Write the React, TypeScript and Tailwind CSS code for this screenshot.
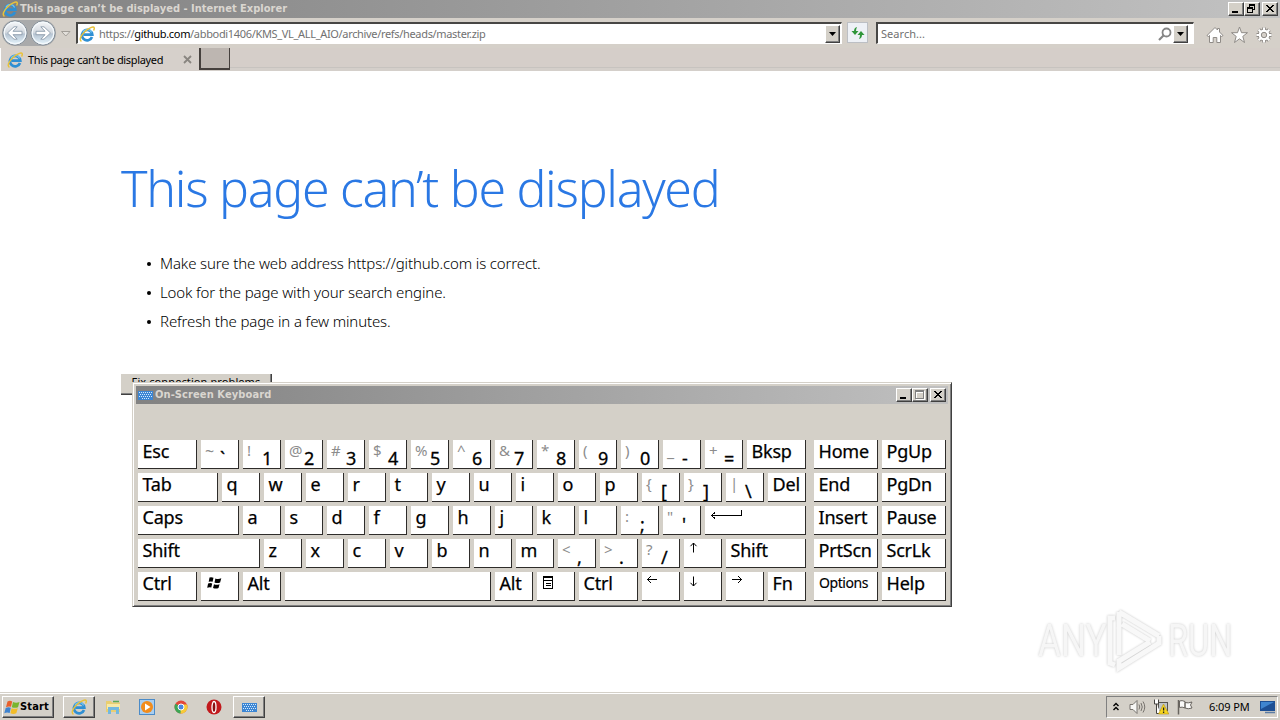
import type { ReactNode } from "react";

type KeyDef = {
  w?: string;
  label?: string;
  top?: string;
  main?: string;
  icon?: ReactNode;
};

const ArrowLeft = (
  <svg width="11" height="9" viewBox="0 0 11 9" className="absolute left-[5px] top-[3px]" shapeRendering="crispEdges" fill="none" stroke="#000">
    <path d="M0 4.5H10M4 1L0.5 4.5L4 8" />
  </svg>
);
const ArrowRight = (
  <svg width="11" height="9" viewBox="0 0 11 9" className="absolute left-[6px] top-[3px]" shapeRendering="crispEdges" fill="none" stroke="#000">
    <path d="M0 4.5H10M6 1L9.5 4.5L6 8" />
  </svg>
);
const ArrowUp = (
  <svg width="9" height="11" viewBox="0 0 9 11" className="absolute left-[5px] top-[3px]" fill="none" stroke="#000">
    <path d="M4.5 1V10.5M1.5 4.200L4.5 1L7.500 4.200" />
  </svg>
);
const ArrowDown = (
  <svg width="9" height="11" viewBox="0 0 9 11" className="absolute left-[5px] top-[4px]" fill="none" stroke="#000">
    <path d="M4.5 0.500V10M1.500 6.800L4.5 10L7.500 6.800" />
  </svg>
);
const EnterArrow = (
  <svg width="32" height="10" viewBox="0 0 32 10" className="absolute left-[6px] top-[4px]" shapeRendering="crispEdges" fill="none" stroke="#000">
    <path d="M0 5.5H30.5V0M4 2.5L0.5 5.5L4 8.5" />
  </svg>
);
const WinLogo = (
  <svg width="15" height="12" viewBox="0 0 15 12" className="absolute left-[6px] top-[5px]" fill="#000">
    <path d="M2.500 0.600Q4.500 0 6.500 0.800L5.600 4.800Q4 4 1.700 4.800zM8.400 1.400Q11 2.800 14.300 1.300L13.100 5.400Q10.500 6.600 7.500 5.400zM1.100 6.500Q3.500 5.700 5.200 6.500L4.300 10.500Q2.500 9.800 0.200 10.800zM7 7.200Q9.500 8.400 12.500 7.200L11.500 11Q9 12.200 6 11z" />
  </svg>
);
const MenuIcon = (
  <svg width="11" height="13" viewBox="0 0 11 13" className="absolute left-[6px] top-[4px]" shapeRendering="crispEdges">
    <rect x="0.500" y="0.500" width="9" height="12" fill="#fff" stroke="#000" />
    <path d="M0 1.500H10M0 4.500H10M3 7.500H8M3 9.500H8" stroke="#000" />
  </svg>
);

const letters = (s: string): KeyDef[] => s.split("").map((c) => ({ label: c }));
const pair = (top: string, main: string): KeyDef => ({ top, main });

const rows: KeyDef[][] = [
  [
    { label: "Esc", w: "w-[59px]" },
    pair("~", "`"),
    pair("!", "1"),
    pair("@", "2"),
    pair("#", "3"),
    pair("$", "4"),
    pair("%", "5"),
    pair("^", "6"),
    pair("&", "7"),
    pair("*", "8"),
    pair("(", "9"),
    pair(")", "0"),
    pair("_", "-"),
    pair("+", "="),
    { label: "Bksp", w: "w-[59px]" },
  ],
  [
    { label: "Tab", w: "w-[80px]" },
    ...letters("qwertyuiop"),
    pair("{", "["),
    pair("}", "]"),
    pair("|", "\\"),
    { label: "Del" },
  ],
  [
    { label: "Caps", w: "w-[101px]" },
    ...letters("asdfghjkl"),
    pair(":", ";"),
    pair('"', "'"),
    { icon: EnterArrow, w: "w-[101px]" },
  ],
  [
    { label: "Shift", w: "w-[122px]" },
    ...letters("zxcvbnm"),
    pair("<", ","),
    pair(">", "."),
    pair("?", "/"),
    { icon: ArrowUp },
    { label: "Shift", w: "w-[80px]" },
  ],
  [
    { label: "Ctrl", w: "w-[59px]" },
    { icon: WinLogo },
    { label: "Alt" },
    { w: "w-[206px]" },
    { label: "Alt" },
    { icon: MenuIcon },
    { label: "Ctrl", w: "w-[59px]" },
    { icon: ArrowLeft },
    { icon: ArrowDown },
    { icon: ArrowRight },
    { label: "Fn" },
  ],
];

const sideKeys = ["Home", "PgUp", "End", "PgDn", "Insert", "Pause", "PrtScn", "ScrLk", "Options", "Help"];

function Key({ w = "w-[38px]", label, top, main, icon }: KeyDef) {
  const small = label === "Options";
  return (
    <div className={`relative h-[29px] shrink-0 border-r border-b border-[#2e2c2a] bg-white overflow-hidden ${w}`}>
      {label && (
        <span
          className={
            small
              ? "block pl-[5px] pt-px text-[14px] leading-[20px] tracking-[-0.45px] [-webkit-text-stroke:0.15px_#000]"
              : "-mt-px block pl-[4.500px] text-[18px] leading-[24px] tracking-[-0.2px] [-webkit-text-stroke:0.25px_#000]"
          }
        >
          {label}
        </span>
      )}
      {top && (
        <span
          className={
            top === "~" || top === "_"
              ? "absolute left-[4px] top-px text-[16px] leading-[20px] text-[#8c8c8c]"
              : "absolute left-[4px] top-0 text-[15px] leading-[20px] text-[#8c8c8c]"
          }
        >
          {top}
        </span>
      )}
      {main && (
        <span className="absolute left-[19px] top-[6px] text-[18px] leading-[24px] [-webkit-text-stroke:0.3px_#000]">
          {main}
        </span>
      )}
      {icon}
    </div>
  );
}

function IeIcon({ size = 16 }: { size?: number }) {
  return (
    <svg width={size} height={size} viewBox="0 0 16 16" className="shrink-0" fill="none">
      <path d="M13 11A5.200 5.200 0 1 1 13.300 8.700H4.500" stroke="#2f8fd3" strokeWidth="2.700" />
      <path d="M12.600 6.500A4.700 4.700 0 0 0 3.800 6.500" stroke="#74c4f0" strokeWidth="1.100" />
      <path d="M2.500 15.200C0 14.500 1.500 9.500 6 5.500C10 1.800 14.500 0 15.200 1.800C15.500 2.600 15 3.700 14.500 4.500" stroke="#e9c23a" strokeWidth="1.500" />
    </svg>
  );
}

function KeyboardIcon() {
  return (
    <svg width="15" height="9" viewBox="0 0 15 9" className="shrink-0" shapeRendering="crispEdges">
      <rect width="15" height="9" fill="#3c86d4" />
      <path d="M1 1.500H14M1 5.500H14" stroke="#d5e9fb" strokeDasharray="1 1" />
      <path d="M2 3.500H13M4 7.500H11" stroke="#d5e9fb" strokeDasharray="1 1" />
    </svg>
  );
}

function WinButton({ kind }: { kind: "min" | "max" | "restore" | "close" }) {
  return (
    <div className="h-[14px] w-[16px] border border-t-white border-l-white border-r-[#404040] border-b-[#404040] bg-[#d4d0c8] shadow-[inset_-1px_-1px_0_#808080]">
      <svg width="14" height="12" viewBox="0 0 14 12" shapeRendering="crispEdges" fill="none" stroke="#000">
        {kind === "min" && <path d="M3 9H9" strokeWidth="2" />}
        {kind === "max" && (
          <>
            <path d="M3.500 2.500H11.500V10.500H3.500zM3 3.500H12" stroke="#fff" />
            <path d="M2.500 1.500H10.500V9.500H2.500zM2 2.500H11" stroke="#808080" />
          </>
        )}
        {kind === "restore" && <path d="M4.500 4V1.500H9.500V6.500H8M4 2H10M2.500 4.500H7.500V9.500H2.500zM2 5H8" />}
        {kind === "close" && <path d="M3 2L10 9M4 2L11 9M10 2L3 9M11 2L4 9" />}
      </svg>
    </div>
  );
}

function DropButton() {
  return (
    <div className="flex h-[18px] w-[15px] shrink-0 items-center justify-center border border-t-white border-l-white border-r-[#404040] border-b-[#404040] bg-[#d4d0c8] shadow-[inset_-1px_-1px_0_#808080]">
      <svg width="7" height="4" viewBox="0 0 7 4">
        <path d="M0 0H7L3.500 4z" fill="#000" />
      </svg>
    </div>
  );
}

function NavArrow({ flip = false }: { flip?: boolean }) {
  return (
    <svg width="26" height="26" viewBox="0 0 26 26" className={flip ? "-scale-x-100" : ""}>
      <defs>
        <linearGradient id={flip ? "navF" : "navB"} x1="0" y1="0" x2="0" y2="1">
          <stop offset="0" stopColor="#f7f8fa" />
          <stop offset="0.480" stopColor="#d2d8df" />
          <stop offset="0.550" stopColor="#b6c4d2" />
          <stop offset="1" stopColor="#e9f8ff" />
        </linearGradient>
      </defs>
      <circle cx="13" cy="13" r="12" fill={flip ? "url(#navF)" : "url(#navB)"} stroke="#7e8994" />
      <circle cx="13" cy="13" r="10.800" fill="none" stroke="#f4f9fc" strokeWidth="1.200" />
      <path d="M5.500 13L12 6.800H15.200L11 11.300H20V14.700H11L15.200 19.200H12z" fill="#fff" stroke="#8c9cab" strokeWidth="0.900" />
    </svg>
  );
}

const gearTeeth = "M58 1.500V16.500M50.500 9H65.500M52.700 3.700L63.300 14.300M63.300 3.700L52.700 14.300";

function Browser() {
  return (
    <>
      <div className="flex h-[18px] items-center bg-linear-to-r from-[#828282] to-[#c2c2c2] pl-[2px] pr-[2px]">
        <IeIcon />
        <span className="ml-[2px] pt-px font-[DejaVu_Sans_Condensed,Noto_Sans,sans-serif] text-[11px] font-bold tracking-[0.01px] text-[#dad6d0]">
          This page can’t be displayed - Internet Explorer
        </span>
        <div className="ml-auto flex">
          <WinButton kind="min" />
          <WinButton kind="restore" />
          <div className="w-[2px]" />
          <WinButton kind="close" />
        </div>
      </div>

      <div className="flex h-[30px] items-start bg-[#d5d0c9] pt-[4px]">
        <div className="-mt-[2px] ml-[2px] flex w-[54px] gap-[2px] rounded-full bg-[#a9aaab]">
          <NavArrow />
          <NavArrow flip />
        </div>
        <svg width="10" height="6" viewBox="0 0 10 6" className="mt-[9px] ml-[5px]">
          <path d="M0.500 0.500H9L4.800 5z" fill="#e3e0db" stroke="#a29e98" />
        </svg>
        <div className="ml-[5px] flex h-[22px] w-[766px] items-center border-t-2 border-l-2 border-r border-b border-t-[#484745] border-l-[#484745] border-r-white border-b-white bg-white pl-px pr-px">
          <IeIcon />
          <span className="ml-[4px] pt-px text-[11px] tracking-[-0.330px] text-[#717171]">
            https://<span className="text-black">github.com</span>/abbodi1406/KMS_VL_ALL_AIO/archive/refs/heads/master.zip
          </span>
          <div className="ml-auto">
            <DropButton />
          </div>
        </div>
        <div className="ml-[5px] flex h-[21px] w-[21px] items-center justify-center border border-[#bcbfc4] bg-[#eef1f6]">
          <svg width="14" height="14" viewBox="0 0 14 14" fill="#30963a">
            <path d="M6 1Q3.200 1.500 3 5H0.500L4 9L7.500 5H5Q5 3 6 1z" />
            <path d="M8 13Q10.800 12.500 11 9H13.500L10 5L6.500 9H9Q9 11 8 13z" />
          </svg>
        </div>
        <div className="ml-[8px] flex h-[22px] w-[318px] items-center border-t-2 border-l-2 border-r border-b border-t-[#484745] border-l-[#484745] border-r-white border-b-white bg-white pl-[3px] pr-[5px]">
          <span className="pt-px text-[11px] tracking-[0.05px] text-[#717171]">Search...</span>
          <svg width="14" height="14" viewBox="0 0 14 14" className="ml-auto mr-[1px]" fill="none" stroke="#858585">
            <circle cx="8.500" cy="5.500" r="4" strokeWidth="1.800" />
            <path d="M5.500 8.500L1 13" strokeWidth="2.200" />
          </svg>
          <DropButton />
        </div>
        <svg width="66" height="18" viewBox="0 0 66 18" className="mt-[4px] ml-[12px]" fill="#fff" stroke="#8f8b87">
          <path d="M1 9.500L9 1.500L11.500 4V2.500H13.500V6L17 9.500L15.500 10.500L14.500 9.500V16.500H10.800V11.500H7.200V16.500H3.500V9.500L2.500 10.500z" />
          <path d="M33.500 1L35.500 6.700H41.500L36.800 10.400L38.500 16.500L33.500 12.800L28.500 16.500L30.200 10.400L25.500 6.700H31.500z" />
          <path d={gearTeeth} strokeWidth="4" />
          <circle cx="58" cy="9" r="5.800" />
          <path d={gearTeeth} stroke="#fff" strokeWidth="2.200" />
          <circle cx="58" cy="9" r="2.700" fill="#d5d0c9" />
        </svg>
      </div>

      <div className="flex h-[23px] bg-[#d5cec9] shadow-[inset_0_-3px_0_#d4cfca,inset_0_-4px_0_#c7c3bf]">
        <div className="flex h-[23px] w-[199px] items-center border-l border-white bg-[#d6d0cb] pl-[6px]">
          <IeIcon />
          <span className="ml-[5px] pt-[2px] text-[11px] tracking-[-0.340px] text-black">This page can’t be displayed</span>
          <svg width="9" height="9" viewBox="0 0 9 9" className="ml-auto mr-[7px]" stroke="#898580" strokeWidth="1.800">
            <path d="M1 1L8 8M8 1L1 8" />
          </svg>
        </div>
        <div className="h-[22px] w-[31px] border-r border-b-2 border-l-2 border-[#45403d] bg-[#bdb6b1]" />
      </div>

      <main className="h-[621px] overflow-hidden bg-white pt-[87px] pl-[121px]">
        <h1 className="h-[60px] whitespace-nowrap text-[50px] leading-[60px] font-light tracking-[-1.280px] text-[#2a78e4]">
          This page can’t be displayed
        </h1>
        <ul className="mt-[31px] text-[15px] leading-[29px] font-light tracking-[-0.125px] text-black">
          {[
            "Make sure the web address https://github.com is correct.",
            "Look for the page with your search engine.",
            "Refresh the page in a few minutes.",
          ].map((t) => (
            <li key={t} className="flex items-center pl-[26px]">
              <span className="mr-[9px] h-[4px] w-[4px] rounded-full bg-black" />
              {t}
            </li>
          ))}
        </ul>
        <button className="mt-[38px] block h-[21px] w-[151px] border-r border-b border-[#404040] bg-[#d4d0c8] pb-[4px] text-[11px] leading-[14px] tracking-[0.100px] shadow-[inset_-1px_-1px_0_#808080]">
          Fix connection problems
        </button>
      </main>
    </>
  );
}

function Keyboard() {
  return (
    <div className="absolute top-[382px] left-[132px] h-[225px] w-[820px] border border-t-[#d4d0c8] border-l-[#d4d0c8] border-r-[#404040] border-b-[#404040] bg-[#d4d0c8] p-[3px] shadow-[inset_1px_1px_0_#fff,inset_-1px_-1px_0_#808080]">
      <div className="flex h-[18px] items-center bg-linear-to-r from-[#828282] to-[#c0c0c0] pl-[2px] pr-[2px]">
        <KeyboardIcon />
        <span className="ml-[2px] pt-px font-[DejaVu_Sans_Condensed,Noto_Sans,sans-serif] text-[11px] font-bold tracking-[0.100px] text-[#dad6d0]">
          On-Screen Keyboard
        </span>
        <div className="ml-auto flex">
          <WinButton kind="min" />
          <WinButton kind="max" />
          <div className="w-[2px]" />
          <WinButton kind="close" />
        </div>
      </div>
      <div className="flex gap-[8px] pt-[36px] pl-[2px]">
        <div className="flex flex-col gap-1">
          {rows.map((row, i) => (
            <div key={i} className="flex gap-1">
              {row.map((k, j) => (
                <Key key={j} {...k} />
              ))}
            </div>
          ))}
        </div>
        <div className="grid grid-cols-2 content-start gap-1">
          {sideKeys.map((k) => (
            <Key key={k} label={k} w="w-[64px]" />
          ))}
        </div>
      </div>
    </div>
  );
}

function Watermark() {
  return (
    <div className="absolute top-[608px] left-[1038px] flex h-[66px] w-[194px] items-center justify-between text-[#f6f6f6]">
      <span className="w-[64px] origin-left scale-x-[0.8] font-[Roboto,sans-serif] text-[44px] leading-[66px] font-normal [text-shadow:0_0_3px_#c8c8c8]">
        ANY
      </span>
      <svg width="60" height="66" viewBox="0 0 60 66" className="shrink-0 drop-shadow-[0_0_1px_#c4c4c4]" fill="none" stroke="#f8f8f8" strokeWidth="5">
        <path d="M10 10H5V55L10 57" />
        <path d="M14 4V47M14 4L54 28M17 16L45 33M54 28V35L14 60V53L45 34" />
      </svg>
      <span className="w-[64px] origin-left scale-x-[0.74] font-[Roboto,sans-serif] text-[44px] leading-[66px] font-normal [text-shadow:0_0_3px_#c8c8c8]">
        RUN
      </span>
    </div>
  );
}

function Taskbar() {
  return (
    <div className="flex h-[28px] items-center border-t border-[#d4d0c8] bg-[#d4d0c8] pt-px pl-[2px] shadow-[inset_0_1px_0_#fff]">
      <div className="flex h-[22px] w-[52px] items-center border border-t-white border-l-white border-r-[#404040] border-b-[#404040] pl-px shadow-[inset_-1px_-1px_0_#808080]">
        <svg width="16" height="15" viewBox="0 0 16 15" className="shrink-0">
          <path d="M3.500 1.500Q6 0 8.200 1.500L7 6.800Q4.500 5.800 2 7.200z" fill="#e8602c" />
          <path d="M9 2Q12 3.500 15.500 2L14 7.200Q11 8.500 7.800 7.200z" fill="#79b52f" />
          <path d="M1.700 8Q4.500 6.800 6.800 7.800L5.700 13Q3 11.800 0.300 13.200z" fill="#3f83cf" />
          <path d="M7.600 8.200Q10.500 9.500 13.800 8.200L12.300 13.300Q9.500 14.500 6.400 13.300z" fill="#f3bd29" />
        </svg>
        <span className="pt-px font-[DejaVu_Sans_Condensed,Noto_Sans,sans-serif] text-[11px] font-bold tracking-[0.15px]">Start</span>
      </div>
      <div className="ml-[9px] flex h-[22px] w-[32px] items-center justify-center border border-t-white border-l-white border-r-[#404040] border-b-[#404040] shadow-[inset_-1px_-1px_0_#808080]">
        <IeIcon />
      </div>
      <svg width="17" height="16" viewBox="0 0 17 16" className="ml-[10px]">
        <path d="M1 2H6L7 3.500H15V13H1z" fill="#e9ce70" />
        <path d="M2 5H15V10H2z" fill="#f7e9a8" />
        <path d="M3 8H14V15H11V11H6V15H3z" fill="#73b8df" />
        <path d="M8 2.500H14" stroke="#5ca957" strokeWidth="1.500" />
      </svg>
      <svg width="16" height="16" viewBox="0 0 16 16" className="ml-[17px]">
        <rect x="0.500" y="0.500" width="15" height="15" fill="#a9cef0" stroke="#4b8bc8" />
        <circle cx="8" cy="8" r="6" fill="#f28c1c" />
        <path d="M6 4.500L11.500 8L6 11.500z" fill="#fff" />
      </svg>
      <svg width="14" height="14" viewBox="0 0 14 14" className="ml-[19px]">
        <circle cx="7" cy="7" r="6.500" fill="#e3473a" />
        <path d="M7 7L1.400 3.700A6.500 6.500 0 0 0 6.500 13.500L10 8.500z" fill="#3ca655" />
        <path d="M7 7L6.500 13.500A6.500 6.500 0 0 0 13 4.500H7z" fill="#f7cb38" />
        <circle cx="7" cy="7" r="3" fill="#4a86e0" stroke="#fff" />
      </svg>
      <svg width="16" height="16" viewBox="0 0 16 16" className="ml-[18px]">
        <circle cx="8" cy="8" r="7.500" fill="#c2191c" />
        <ellipse cx="8" cy="8" rx="2" ry="5.500" fill="#8a1012" stroke="#fff" strokeWidth="1.300" />
      </svg>
      <div className="ml-[11px] flex h-[22px] w-[32px] items-center justify-center border border-t-white border-l-white border-r-[#404040] border-b-[#404040] shadow-[inset_-1px_-1px_0_#808080]">
        <KeyboardIcon />
      </div>
      <div className="mr-[2px] ml-auto flex h-[22px] w-[172px] items-center border border-t-[#808080] border-l-[#808080] border-r-white border-b-white pl-[5px]">
        <svg width="8" height="9" viewBox="0 0 8 9" className="-mt-[2px]" fill="none" stroke="#000" strokeWidth="1.400">
          <path d="M1.500 4L4 1.500L6.500 4M1.500 8L4 5.500L6.500 8" />
        </svg>
        <svg width="17" height="16" viewBox="0 0 17 16" className="ml-[9px]" fill="none" stroke="#77736e">
          <path d="M1 5.500H4L8 1.500V14.500L4 10.500H1z" fill="#f7f7f5" />
          <path d="M10 5.500Q11.500 8 10 10.500M12 4Q14.500 8 12 12M14 2.500Q17.500 8 14 13.500" />
        </svg>
        <svg width="16" height="16" viewBox="0 0 16 16" className="ml-[7px]">
          <rect x="5.500" y="3.500" width="9" height="8" fill="#bfc4c7" stroke="#55534f" />
          <path d="M1.500 0.500V5H5.500V0.500M3.500 5V14.500H8" fill="#fff" stroke="#44423f" />
          <path d="M10.500 5L15.800 15H5.500z" fill="#f7d61f" stroke="#b79210" strokeWidth="0.600" />
          <path d="M10.600 8.500V11.500M10.600 12.500V14" stroke="#222" strokeWidth="1.300" />
        </svg>
        <svg width="17" height="16" viewBox="0 0 17 16" className="ml-[8px]" fill="#fafaf8" stroke="#68645f">
          <path d="M1.500 1V15.500" strokeWidth="1.500" />
          <path d="M2.500 2Q5 1 8 2.500V9Q5 7.500 2.500 8.500zM8 3.500Q11 4.500 15 3L13.500 6L15 9Q11 10.500 8 9z" />
        </svg>
        <span className="ml-[15px] whitespace-nowrap text-[11px] tracking-[-0.1px]">6:09 PM</span>
        <svg width="16" height="14" viewBox="0 0 16 14" className="ml-auto mr-[1px] shrink-0">
          <path d="M0 1H15V11H0z" fill="#1d4f94" />
          <path d="M1 2H14L1 9z" fill="#3f85cf" />
          <path d="M5 12.500H15" stroke="#5c7ca4" strokeWidth="1.500" />
        </svg>
      </div>
    </div>
  );
}

export default function App() {
  return (
    <div className="relative h-[720px] w-[1280px] overflow-hidden bg-white font-[Noto_Sans,sans-serif] text-black">
      <Browser />
      <Keyboard />
      <Watermark />
      <Taskbar />
    </div>
  );
}
